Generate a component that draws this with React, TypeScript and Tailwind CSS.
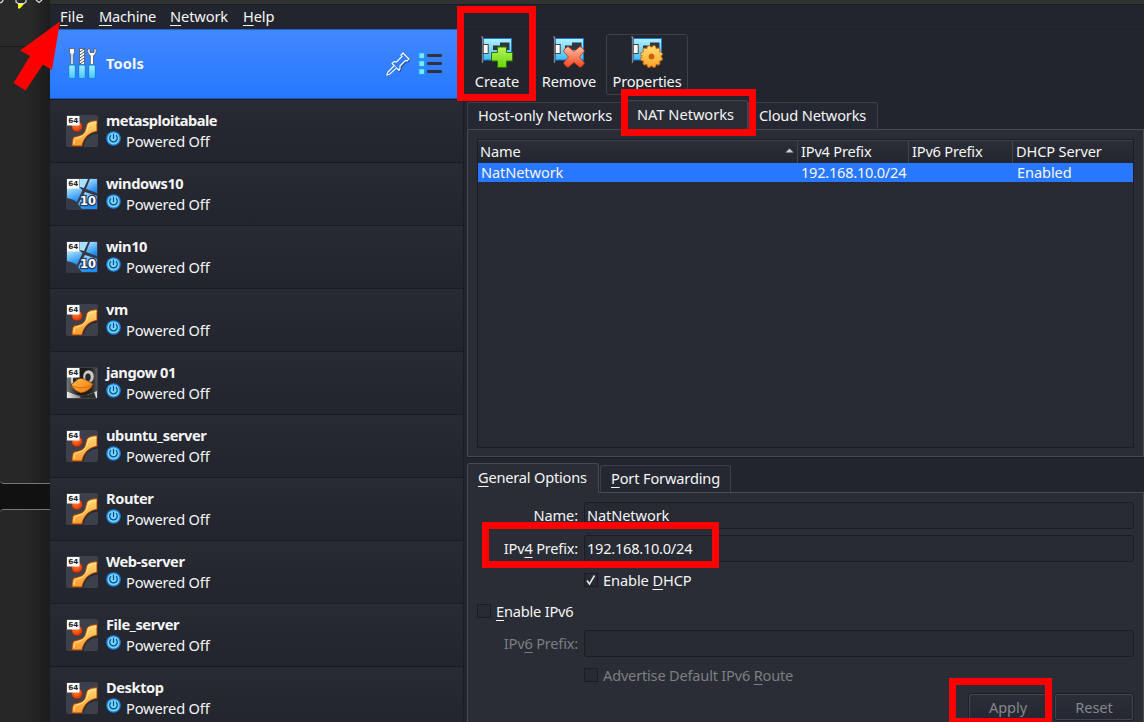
import type { ReactNode } from "react";

const U = ({ children }: { children: ReactNode }) => (
  <span className="underline decoration-1 underline-offset-[3px]">{children}</span>
);

const Badge64 = () => (
  <g>
    <rect x="1" y="1" width="12.500" height="9.500" fill="#fff" />
    <text x="2.300" y="8.300" fontSize="7" fontWeight="bold" fontFamily="DejaVu Sans" fill="#222" textLength="9.800" lengthAdjust="spacingAndGlyphs">64</text>
  </g>
);

const OtherIcon = () => (
  <svg className="size-8 shrink-0" viewBox="0 0 32 32">
    <defs>
      <linearGradient id="og" x1="0" y1="0" x2="0" y2="1">
        <stop offset="0" stopColor="#ffd873" />
        <stop offset="1" stopColor="#ff9a2e" />
      </linearGradient>
      <radialGradient id="ob" cx=".4" cy=".3" r=".7">
        <stop offset="0" stopColor="#ff8a3c" />
        <stop offset="1" stopColor="#e03400" />
      </radialGradient>
    </defs>
    <rect width="32" height="32" rx="2" fill="#3c404b" />
    <path d="M31 5.500V18C24 18 18 22 17 30.500H6C6 25 6 22 8 21C13 19 18 19 19 16C20 12 20 8 22 7Q24 6 31 5.500Z" fill="#1c1e24" transform="translate(.8 .8)" opacity=".7" />
    <path d="M31 5.500V16.500C25 17 18 21 16 31H6C6 26 6.500 23 8 22C12 20.500 17 21 19 16C20.500 12 20 9.500 22 7.700Q24 6 31 5.500Z" fill="url(#og)" stroke="#a33a00" strokeWidth=".9" />
    <path d="M8 29Q8 24 10 23.500Q17 22 20.500 17Q22 11 23.500 9.500Q26 8 30.500 7.500" fill="none" stroke="#ffe9a0" strokeWidth=".9" />
    <circle cx="11" cy="11.500" r="5.300" fill="url(#ob)" stroke="#9b2100" strokeWidth=".5" />
    <Badge64 />
  </svg>
);

const WinIcon = () => (
  <svg className="size-8 shrink-0" viewBox="0 0 32 32">
    <defs>
      <linearGradient id="wg" x1="0" y1="0" x2=".4" y2="1">
        <stop offset="0" stopColor="#b5e8ff" />
        <stop offset="1" stopColor="#1e8cf5" />
      </linearGradient>
    </defs>
    <rect width="32" height="32" rx="2" fill="#353a48" />
    <path d="M1 10H14L16.500 12L11 24Q7 21 1 20Z" fill="url(#wg)" />
    <path d="M14 1H22L18 10L14 9Z" fill="#a9e2ff" />
    <path d="M24 1H31V15L20 11Z" fill="url(#wg)" />
    <path d="M19 14L31 18V31H16L12 26Z" fill="url(#wg)" />
    <text x="14" y="26.500" fontSize="11.500" fontWeight="bold" fontFamily="DejaVu Sans" fill="#fff" stroke="#233b5c" strokeWidth="2.500" paintOrder="stroke" textLength="16">10</text>
    <Badge64 />
  </svg>
);

const LinuxIcon = () => (
  <svg className="size-8 shrink-0" viewBox="0 0 32 32">
    <defs>
      <linearGradient id="lg" x1="0" y1="0" x2="1" y2="1">
        <stop offset="0" stopColor="#ffc04a" />
        <stop offset="1" stopColor="#f0700c" />
      </linearGradient>
      <linearGradient id="lb" x1="0" y1="0" x2="1" y2="0">
        <stop offset="0" stopColor="#777" />
        <stop offset=".4" stopColor="#1a1a1a" />
        <stop offset=".8" stopColor="#222" />
        <stop offset="1" stopColor="#555" />
      </linearGradient>
      <linearGradient id="ls" x1="0" y1="0" x2="1" y2="0">
        <stop offset="0" stopColor="#eee" />
        <stop offset=".5" stopColor="#777" />
        <stop offset="1" stopColor="#ddd" />
      </linearGradient>
    </defs>
    <rect width="32" height="32" rx="2" fill="#3c404b" />
    <rect x="1" y="1" width="30" height="30" fill="url(#lb)" />
    <path d="M1 24.500Q7 27 12 28.500Q20 29 26 26L31 24V31H1Z" fill="url(#ls)" />
    <path d="M13 28.500Q25 28 28 25L30 31H15Z" fill="#2d2d2d" />
    <ellipse cx="7.500" cy="13" rx="2.800" ry="4.500" fill="#ccc" />
    <ellipse cx="8.500" cy="13" rx="1.500" ry="3" fill="#222" />
    <ellipse cx="22.500" cy="9.500" rx="5.300" ry="6.300" fill="#c9c9c9" />
    <ellipse cx="22" cy="10.300" rx="2.700" ry="3.800" fill="#262626" />
    <path d="M5 18Q8 15 12 12Q15 10.500 18 12L25 15.500Q28 17 26 19.500Q21 26 14.500 26Q8 24 5 18Z" fill="url(#lg)" stroke="#5b2900" strokeWidth=".7" />
    <path d="M5.500 18.500Q14 23 26 18.500" fill="none" stroke="#c4650e" strokeWidth=".7" />
    <Badge64 />
  </svg>
);

const Power = () => (
  <svg className="mt-px size-[15px] shrink-0" viewBox="0 0 15 15">
    <circle cx="7.500" cy="7.500" r="7.300" fill="#1c80e2" />
    <circle cx="7.500" cy="7.500" r="6" fill="#72d4ff" />
    <path d="M5 4.300A3.800 3.800 0 1 0 10 4.300M7.500 2.800V8" fill="none" stroke="#0c4a86" strokeWidth="1.200" />
  </svg>
);

const ToolsIcon = () => (
  <svg className="h-[34px] w-[30px] shrink-0" viewBox="0 0 30 34">
    <defs>
      <linearGradient id="tg" x1="0" y1="0" x2="0" y2="1">
        <stop offset="0" stopColor="#a9f2ff" />
        <stop offset="1" stopColor="#45c4fb" />
      </linearGradient>
    </defs>
    <g fill="#fff" stroke="#57606e" strokeWidth=".9">
      <path d="M2.500 1.500H7.500V5.500L6.200 7.500V17.500H3.800V7.500L2.500 5.500Z" />
      <rect x="12.500" y="1.500" width="5" height="16" />
      <path d="M20.800 2Q20 6.500 23.300 8.500V17.500H26.500V8.500Q29.800 6.500 29 2L27 1.500V5.500H23V1.500Z" />
    </g>
    <path d="M12.800 5L17 2M12.800 8L17 5M12.800 11L17 8M12.800 14L17 11M12.800 17L17 14" stroke="#555" strokeWidth="1" />
    <g fill="url(#tg)" stroke="#1685df" strokeWidth="1.200">
      <rect x="1.600" y="17.800" width="6.800" height="13.700" rx="1.800" />
      <rect x="11.600" y="17.800" width="6.800" height="13.700" rx="1.800" />
      <rect x="21.600" y="17.800" width="6.800" height="13.700" rx="1.800" />
    </g>
  </svg>
);

const PinIcon = () => (
  <svg className="h-6 w-6" viewBox="0 0 24 24">
    <g transform="translate(.8 .8)" opacity=".5">
      <path d="M17 1L23 7L21 9L19.500 8.500L14 14Q14.500 17 13 18.500L6 11.500Q8 9 10.500 10L16 4.500L15 3ZM9 15L1 23" fill="none" stroke="#123" strokeWidth="1.800" />
    </g>
    <path d="M17 1L23 7L21 9L19.500 8.500L14 14Q14.500 17 13 18.500L6 11.500Q8 9 10.500 10L16 4.500L15 3Z" fill="#2f7dff" stroke="#fff" strokeWidth="1.200" />
    <path d="M8.300 13.500L1.500 20.500L1 23L3.500 22.500L10.500 15.800" fill="#2f7dff" stroke="#fff" strokeWidth="1.100" />
  </svg>
);

const ListIcon = () => (
  <svg className="h-6 w-6" viewBox="0 0 24 24">
    {[0.700, 8.700, 16.700].map((y) => (
      <g key={y}>
        <rect x=".8" y={y} width="5.800" height="5.800" rx=".8" fill="#7fe2ff" stroke="#159bf0" strokeWidth="1.200" />
        <rect x="9" y={y + 1.300} width="15" height="3" rx="1.200" fill="#30333c" />
      </g>
    ))}
  </svg>
);

const teeth = [15, 45, 75, 105, 135, 165, 195, 225, 255, 285, 315, 345].map((d) => {
  const a = (d * Math.PI) / 180;
  return { d, x: 20.500 + 9.300 * Math.cos(a), y: 20.500 + 9.300 * Math.sin(a) };
});

const NetIcon = ({ kind }: { kind: "add" | "remove" | "props" }) => (
  <svg className="h-8 w-8 shrink-0" viewBox="0 0 32 32">
    <defs>
      <linearGradient id="nb" x1="0" y1="0" x2="0" y2="1">
        <stop offset="0" stopColor="#b4f1ff" />
        <stop offset="1" stopColor="#3ebcf5" />
      </linearGradient>
      <linearGradient id="na" x1="0" y1="0" x2="0" y2="1">
        <stop offset="0" stopColor="#b7f45b" />
        <stop offset="1" stopColor="#66d408" />
      </linearGradient>
      <linearGradient id="nr" x1="0" y1="0" x2="0" y2="1">
        <stop offset="0" stopColor="#ffc0a0" />
        <stop offset="1" stopColor="#f4441c" />
      </linearGradient>
      <linearGradient id="np" gradientUnits="userSpaceOnUse" x1="0" y1="9" x2="0" y2="32">
        <stop offset="0" stopColor="#ffe073" />
        <stop offset="1" stopColor="#fba028" />
      </linearGradient>
    </defs>
    <rect x="2.500" y="2.500" width="28" height="21.500" fill="url(#nb)" stroke="#1878dc" />
    <path d="M.300 1H1.500V27" fill="none" stroke="#858585" strokeWidth="1.300" />
    <rect x="2.200" y="8.500" width="5" height="9" fill="#fff" stroke="#444" />
    <path d="M12 9.500H19V6.500H28.500V14H12Z" fill="#303640" />
    {kind === "add" && (
      <path d="M16.500 11H25.500V16.500H31.500V25H25.500V31.500H16.500V25H10.500V16.500H16.500Z" fill="url(#na)" stroke="#287600" strokeWidth="1" />
    )}
    {kind === "remove" && (
      <path d="M15 10.500L21 15.500L27 10.500Q30 11.500 31.500 15L26.500 21L31.500 27Q30 30.500 27 31.500L21 26.500L15 31.500Q12 30.500 10.500 27L15.500 21L10.500 15Q12 11.500 15 10.500Z" fill="url(#nr)" stroke="#b5320f" strokeWidth=".8" />
    )}
    {kind === "props" && (
      <g>
        {teeth.map(({ d, x, y }) => <circle key={d} cx={x} cy={y} r="2" fill="url(#np)" stroke="#c4620c" strokeWidth=".9" />)}
        <circle cx="20.500" cy="20.500" r="9.300" fill="url(#np)" />
        <circle cx="20.500" cy="20.500" r="2.500" fill="#d45f08" stroke="#b54c00" strokeWidth=".7" />
      </g>
    )}
  </svg>
);

const machines = [
  ["metasploitabale", "o"],
  ["windows10", "w"],
  ["win10", "w"],
  ["vm", "o"],
  ["jangow 01", "l"],
  ["ubuntu_server", "o"],
  ["Router", "o"],
  ["Web-server", "o"],
  ["File_server", "o"],
  ["Desktop", "o"],
];

const Check = ({ on }: { on?: boolean }) => (
  <span className="flex size-[14px] shrink-0 items-center justify-center border border-[#1b1c25] bg-[#272933]">
    {on && (
      <svg className="size-3" viewBox="0 0 12 12">
        <path d="M2 6.500L4.500 10L9.500 1.500" fill="none" stroke="#e6e6e6" strokeWidth="1.600" />
      </svg>
    )}
  </span>
);

const Field = ({ children }: { children?: ReactNode }) => (
  <div className="h-[27px] w-[550px] rounded-[3px] border border-[#1b1c25] bg-[#272933] pl-[2px] leading-[25px]">{children}</div>
);

export default function App() {
  return (
    <div className="relative flex h-[722px] w-[1144px] overflow-hidden bg-[#22252e] font-['Noto_Sans',sans-serif] text-[14.600px] leading-5 tracking-[-0.1px] whitespace-nowrap text-[#f5f5f5]">
      <aside className="flex w-[50px] shrink-0 flex-col bg-[#111]">
        <div className="h-[46px] bg-[linear-gradient(90deg,#292929_60%,#1d1d1d)]">
          <svg className="h-[10px] w-[50px]" viewBox="0 0 50 10">
            <path d="M0 3Q3 2 3 0M16 0V2L18 3.500H24L26 2V0M36 0L39 2.500L42 0" fill="none" stroke="#ddd" strokeWidth="1.200" />
            <path d="M18 4H24L20 8.500H18Z" fill="#ffff10" />
          </svg>
        </div>
        <div className="h-[438px] rounded-bl-[4px] border-t border-b border-t-[#1b1b1b] border-b-[#777] bg-[linear-gradient(90deg,#272727_50%,#1c1c1c)]" />
        <div className="mt-[25px] flex-1 rounded-tl-[4px] border-t border-[#777] bg-[linear-gradient(90deg,#272727_50%,#1c1c1c)]" />
      </aside>

      <div className="flex min-w-0 flex-1 flex-col">
        <div className="h-[5px] shrink-0 border-b border-[#1b1c22] bg-[#323232]" />
        <nav className="flex h-6 shrink-0 pt-px pl-[10px]">
          <span className="w-[39px] tracking-[0.1px]"><U>F</U>ile</span>
          <span className="w-[71px] tracking-[-0.2px]"><U>M</U>achine</span>
          <span className="w-[73px]"><U>N</U>etwork</span>
          <span><U>H</U>elp</span>
        </nav>
        <div className="flex min-h-0 flex-1">
          <section className="flex w-[414px] shrink-0 flex-col border-r border-[#1a1c24]">
            <div className="flex h-[70px] shrink-0 items-center border-y border-t-[#2763c4] border-b-[#1d55b8] bg-linear-to-b from-[#4088ff] to-[#2677ff] pl-[17px]">
              <ToolsIcon />
              <b className="mb-[2px] ml-[9px] font-bold tracking-[0.1px]">Tools</b>
              <div className="ml-auto flex gap-2 pr-[21px]">
                <PinIcon />
                <ListIcon />
              </div>
            </div>
            {machines.map(([name, kind]) => (
              <div key={name} className="flex h-[63px] shrink-0 border-t border-[#1a1c24] bg-linear-to-b from-[#282a34] to-[#22252d] pt-[15px] pl-4">
                {kind === "o" ? <OtherIcon /> : kind === "w" ? <WinIcon /> : <LinuxIcon />}
                <div className="-mt-[5px] ml-2">
                  <div className={name === "metasploitabale" ? "h-5 font-bold tracking-[-0.5px]" : "h-5 font-bold tracking-[-0.4px]"}>{name}</div>
                  <div className="flex h-[22px]">
                    <Power />
                    <span className="ml-[5px] leading-[23px] tracking-[-0.15px]">Powered Off</span>
                  </div>
                </div>
              </div>
            ))}
          </section>

          <main className="flex min-w-0 flex-1 flex-col border-t border-[#1e2129] pl-[3px]">
            <div className="flex h-[70px] shrink-0 pt-[4px]">
              <div className="flex h-[60px] w-[60px] flex-col items-center pt-[2px]"><NetIcon kind="add" /><span className="mt-[3px]">Create</span></div>
              <div className="ml-[7px] flex h-[60px] w-[70px] flex-col items-center pt-[2px]"><NetIcon kind="remove" /><span className="mt-[3px]">Remove</span></div>
              <div className="ml-[2px] flex h-[61px] w-[82px] flex-col items-center rounded-[3px] border border-[#3d4049] bg-[#23262f] pt-[1px]"><NetIcon kind="props" /><span className="mt-[3px] tracking-[-0.2px]">Properties</span></div>
            </div>

            <div className="flex h-[29px] shrink-0 items-end">
              <div className="h-[27px] w-[158px] rounded-tl-[3px] border border-[#3d4049] border-b-transparent bg-[#252833] pl-[10px] leading-6 tracking-[-0.050px]">Host-only Networks</div>
              <div className="z-10 h-[29px] w-[123px] rounded-t-[3px] border border-b-0 border-[#41454e] bg-[#2a2d36] pl-[11px] leading-[27px] tracking-normal">NAT Networks</div>
              <div className="h-[27px] w-[130px] rounded-tr-[3px] border border-[#3d4049] border-b-transparent bg-[#252833] pl-[10px] leading-6 tracking-[-0.15px]">Cloud Networks</div>
            </div>
            <div className="h-[328px] shrink-0 border border-[#464a53] bg-[#2a2d35] px-[9px] pt-[9px]">
              <div className="flex h-[309px] flex-col border border-[#1b1c25] bg-[#272933]">
                <div className="grid h-[23px] shrink-0 grid-cols-[320px_111px_104px_1fr] border-t border-[#3d4049] bg-linear-to-b from-[#2b2e38] to-[#23262e] leading-[21px]">
                  <div className="flex justify-between border-r border-[#42454e] pr-[3px] pl-[2px]">
                    <span>Name</span>
                    <svg className="mt-[7px] h-[5px] w-[9px]" viewBox="0 0 9 5"><path d="M.5 4.500L4.500 .5L8.500 4.500Z" fill="#ccc" /></svg>
                  </div>
                  <div className="border-r border-[#42454e] pl-[3px] tracking-[-0.2px]">IPv4 Prefix</div>
                  <div className="border-r border-[#42454e] pl-[3px] tracking-[-0.2px]">IPv6 Prefix</div>
                  <div className="pl-[3px] tracking-[-0.150px]">DHCP Server</div>
                </div>
                <div className="grid h-[19px] shrink-0 grid-cols-[320px_111px_104px_1fr] bg-[#2777ff] leading-[19px]">
                  <span className="pl-[3px]">NatNetwork</span>
                  <span className="pl-[3px] tracking-[-0.250px]">192.168.10.0/24</span>
                  <span />
                  <span className="pl-[4px]">Enabled</span>
                </div>
              </div>
            </div>

            <div className="flex h-[35px] shrink-0 items-end border-t border-[#1a1c24]">
              <div className="z-10 -mb-px h-[30px] w-[132px] rounded-t-[3px] border border-b-0 border-[#464a53] bg-[#2a2d35] pl-[10px] leading-[27px] tracking-[-0.2px]"><U>G</U>eneral Options</div>
              <div className="ml-px h-[27px] w-[131px] rounded-t-[3px] border border-[#3d4049] border-b-transparent bg-[#252833] pl-[10px] leading-6 tracking-[-0.150px]"><U>P</U>ort Forwarding</div>
            </div>
            <div className="flex flex-1 flex-col border-x border-t border-[#464a53] bg-[#2a2d35] pt-[9px]">
              <div className="flex h-[33px] shrink-0"><span className="w-[116px] pr-[6px] text-right leading-[26px]">Name:</span><Field>NatNetwork</Field></div>
              <div className="flex h-[31px] shrink-0"><span className="w-[116px] pr-[6px] text-right leading-[26px] tracking-[-0.2px]">IPv<U>4</U> Prefix:</span><Field><span className="tracking-[-0.250px]">192.168.10.0/24</span></Field></div>
              <div className="flex h-[28px] shrink-0 items-center gap-[5px] pl-[116px]"><Check on /><span>Enable <U>D</U>HCP</span></div>
              <div className="flex h-[34px] shrink-0 items-center gap-[5px] pl-[9px]"><Check /><span className="tracking-[-0.2px]"><U>E</U>nable IPv6</span></div>
              <div className="mt-[2px] flex h-[31px] shrink-0 text-[#7d7e82]"><span className="w-[116px] pr-[6px] text-right leading-[27px] tracking-[-0.2px]">IPv<U>6</U> Prefix:</span><Field /></div>
              <div className="flex h-[28px] shrink-0 items-center gap-[5px] pl-[116px] text-[#7d7e82]"><Check /><span className="tracking-[-0.2px]">Advertise Default IPv6 <U>R</U>oute</span></div>
              <div className="mt-[5px] flex justify-end gap-[8px] pr-[10px] text-center leading-6 text-[#85868a]">
                <div className="h-[26px] w-[78px] rounded-[2px] border border-[#42454e] bg-linear-to-b from-[#2b2e39] to-[#252832] shadow-[0_0_0_1px_#1d1f27]">Apply</div>
                <div className="h-[26px] w-[78px] rounded-[2px] border border-[#42454e] bg-linear-to-b from-[#2b2e39] to-[#252832] shadow-[0_0_0_1px_#1d1f27]">Reset</div>
              </div>
            </div>
          </main>
        </div>
      </div>

      <svg className="absolute top-[20px] left-[12px] z-20 h-[72px] w-[50px]" viewBox="0 0 50 72">
        <path d="M48 1.500L40 50L31 44.500L13.500 70.500L1.500 63L18 36L8 30.500Z" fill="#f00" />
      </svg>
      <div className="absolute top-[6px] left-[457px] z-20 h-[95px] w-[79px] border-[7px] border-[#f00]" />
      <div className="absolute top-[89px] left-[621px] z-20 h-[47px] w-[135px] border-[7px] border-[#f00]" />
      <div className="absolute top-[522px] left-[482px] z-20 h-[46px] w-[237px] border-[7px] border-[#f00]" />
      <div className="absolute top-[678px] left-[949px] z-20 h-[47px] w-[103px] border-[7px] border-[#f00]" />
    </div>
  );
}
